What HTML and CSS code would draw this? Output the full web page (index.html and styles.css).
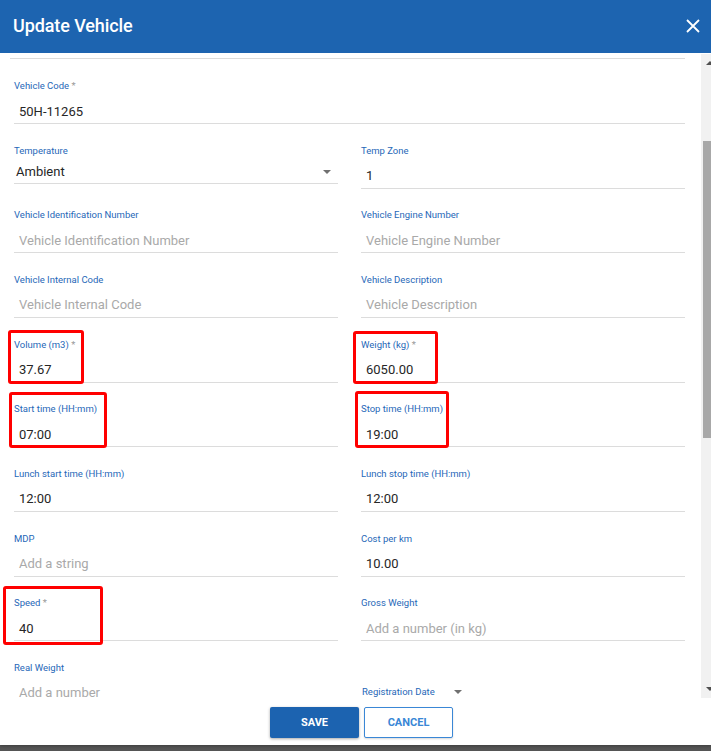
FILE: index.html
```html
<!DOCTYPE html>
<html lang="en">
<head>
<meta charset="utf-8">
<title>Update Vehicle</title>
<link rel="stylesheet" href="styles.css">
</head>
<body>
<div class="dialog">
  <div class="header">
    <h1 class="title">Update Vehicle</h1>
    <svg class="close" width="14" height="14" viewBox="0 0 14 14"><path d="M1 1L13 13M13 1L1 13" stroke="#fff" stroke-width="1.8" fill="none"/></svg>
  </div>
  <div class="body">
    <div class="content">
      <div class="remnant"></div>
      <div class="form">
        <div class="field wide">
          <div class="label">Vehicle Code <span class="req">*</span></div>
          <div class="input">50H-11265</div>
        </div>
        <div class="field">
          <div class="label">Temperature</div>
          <div class="input select">Ambient<span class="caret"></span></div>
        </div>
        <div class="field">
          <div class="label">Temp Zone</div>
          <div class="input">1</div>
        </div>
        <div class="field">
          <div class="label">Vehicle Identification Number</div>
          <div class="input ph">Vehicle Identification Number</div>
        </div>
        <div class="field">
          <div class="label">Vehicle Engine Number</div>
          <div class="input ph">Vehicle Engine Number</div>
        </div>
        <div class="field">
          <div class="label">Vehicle Internal Code</div>
          <div class="input ph">Vehicle Internal Code</div>
        </div>
        <div class="field">
          <div class="label">Vehicle Description</div>
          <div class="input ph">Vehicle Description</div>
        </div>
        <div class="field">
          <div class="label">Volume (m3) <span class="req">*</span></div>
          <div class="input">37.67</div>
        </div>
        <div class="field">
          <div class="label">Weight (kg) <span class="req">*</span></div>
          <div class="input">6050.00</div>
        </div>
        <div class="field">
          <div class="label">Start time (HH:mm)</div>
          <div class="input">07:00</div>
        </div>
        <div class="field">
          <div class="label">Stop time (HH:mm)</div>
          <div class="input">19:00</div>
        </div>
        <div class="field">
          <div class="label">Lunch start time (HH:mm)</div>
          <div class="input">12:00</div>
        </div>
        <div class="field">
          <div class="label">Lunch stop time (HH:mm)</div>
          <div class="input">12:00</div>
        </div>
        <div class="field">
          <div class="label">MDP</div>
          <div class="input ph">Add a string</div>
        </div>
        <div class="field">
          <div class="label">Cost per km</div>
          <div class="input">10.00</div>
        </div>
        <div class="field">
          <div class="label">Speed <span class="req">*</span></div>
          <div class="input">40</div>
        </div>
        <div class="field">
          <div class="label">Gross Weight</div>
          <div class="input ph">Add a number (in kg)</div>
        </div>
        <div class="field">
          <div class="label">Real Weight</div>
          <div class="input ph">Add a number</div>
        </div>
        <div class="field date">
          <div class="label">Registration Date <span class="caret small"></span></div>
        </div>
      </div>
      <div class="mark m-volume"></div>
      <div class="mark m-weight"></div>
      <div class="mark m-start"></div>
      <div class="mark m-stop"></div>
      <div class="mark m-speed"></div>
    </div>
    <div class="scrollbar">
      <div class="arrow up"></div>
      <div class="thumb"></div>
      <div class="arrow down"></div>
    </div>
  </div>
  <div class="footer">
    <button class="btn save">SAVE</button>
    <button class="btn cancel">CANCEL</button>
  </div>
</div>
</body>
</html>
```
FILE: styles.css
```css
html, body {
  margin: 0;
  padding: 0;
}
body {
  width: 711px;
  height: 751px;
  overflow: hidden;
  background: linear-gradient(#6e6e6e, #555);
  font-family: Roboto, "Liberation Sans", sans-serif;
}
.dialog {
  width: 711px;
  height: 745px;
  background: #fff;
  display: flex;
  flex-direction: column;
  box-shadow: 0 1px 3px rgba(0,0,0,0.3);
}
.header {
  height: 53px;
  flex: none;
  background: #1d64b0;
  display: flex;
  align-items: center;
  justify-content: space-between;
  padding: 0 11px 0 13px;
}
.title {
  margin: 0;
  color: #fff;
  font-size: 18px;
  font-weight: 500;
  letter-spacing: -0.1px;
  padding-bottom: 2px;
}
.close {
  display: block;
  margin-bottom: 2px;
}
.body {
  flex: 1;
  display: flex;
  min-height: 0;
}
.content {
  flex: 1;
  position: relative;
  overflow: hidden;
  padding: 0 16px 0 14px;
}
.remnant {
  height: 5px;
  border-bottom: 1px solid #dcdcdc;
  margin: 0 0 19px -4px;
}
.form {
  display: grid;
  grid-template-columns: 324px 324px;
  column-gap: 23px;
  row-gap: 18.67px;
  align-items: start;
}
.field.wide {
  grid-column: 1 / -1;
}
.label {
  font-size: 9.5px;
  line-height: 14px;
  padding-top: 1px;
  height: 13px;
  color: #1f68b8;
  white-space: nowrap;
}
.req {
  color: #9a9a9a;
}
.input {
  height: 24.5px;
  padding: 6.5px 0 0 5px;
  font-size: 13px;
  line-height: 26px;
  color: #262626;
  border-bottom: 1px solid #dcdcdc;
  white-space: nowrap;
}
.input.ph {
  color: #a9a9a9;
}
.input.select {
  height: 20px;
  padding: 5.5px 0 1px 2px;
  line-height: 20px;
  display: flex;
  justify-content: space-between;
  align-items: center;
}
.caret {
  display: inline-block;
  width: 0;
  height: 0;
  border-left: 4px solid transparent;
  border-right: 4px solid transparent;
  border-top: 4px solid #707070;
  margin-right: 7px;
}
.caret.small {
  margin: 0 0 0 17px;
  vertical-align: middle;
}
.field.date {
  padding-top: 24px;
}
.field.date .label {
  padding-left: 1px;
}
.mark {
  position: absolute;
  border: 3px solid #ff0000;
  border-radius: 3px;
  box-sizing: border-box;
}
.m-volume { left: 8px;   top: 277px; width: 76px;  height: 54px; }
.m-weight { left: 353px; top: 278px; width: 85px;  height: 53px; }
.m-start  { left: 9px;   top: 339px; width: 98px;  height: 56px; }
.m-stop   { left: 355px; top: 338px; width: 94px;  height: 57px; }
.m-speed  { left: 3px;   top: 533px; width: 100px; height: 59px; }
.scrollbar {
  width: 10px;
  flex: none;
  background: #f1f1f1;
  margin-top: 1px;
  display: flex;
  flex-direction: column;
  align-items: flex-end;
}
.arrow {
  width: 0;
  height: 0;
  border-left: 4px solid transparent;
  border-right: 4px solid transparent;
  margin-right: -3px;
}
.arrow.up {
  border-bottom: 4px solid #505050;
  margin-top: 7px;
}
.arrow.down {
  border-top: 4px solid #505050;
  margin-bottom: 7px;
}
.thumb {
  width: 8px;
  height: 297px;
  background: #a8a8a8;
  margin-top: 76px;
  margin-bottom: auto;
}
.footer {
  flex: none;
  height: 47px;
  box-sizing: border-box;
  padding: 9px 0 0 12px;
  display: flex;
  justify-content: center;
  gap: 5px;
}
.btn {
  width: 89px;
  height: 31px;
  font-family: Roboto, "Liberation Sans", sans-serif;
  font-size: 11px;
  font-weight: 700;
  border-radius: 2px;
  cursor: pointer;
  padding: 0;
}
.btn.save {
  background: #1c63b0;
  color: #fff;
  border: none;
  box-shadow: 0 1px 3px rgba(0,0,0,0.35);
}
.btn.cancel {
  background: #fff;
  color: #3a87d6;
  border: 1px solid #3a87d6;
  box-shadow: 0 1px 2px rgba(0,0,0,0.15);
}
```
